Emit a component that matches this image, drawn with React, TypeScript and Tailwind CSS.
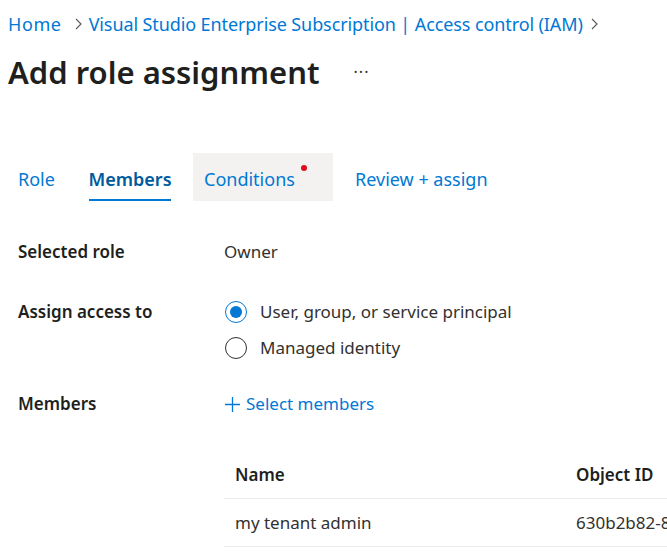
import React from "react";

const font = { fontFamily: '"Noto Sans", "Open Sans", sans-serif' };

function Chevron() {
  return (
    <svg width="10" height="14" viewBox="0 0 10 14" className="ml-[6px]">
      <path d="M3 2 L8 7 L3 12" fill="none" stroke="#605e5c" strokeWidth="1.2" />
    </svg>
  );
}

function Radio({ checked }: { checked?: boolean }) {
  return (
    <span
      className={`w-[22px] h-[22px] rounded-full border flex items-center justify-center shrink-0 ${
        checked ? "border-[#0078d4]" : "border-[#323130]"
      }`}
    >
      {checked && <span className="w-[12px] h-[12px] rounded-full bg-[#0078d4]" />}
    </span>
  );
}

export default function App() {
  return (
    <div className="w-[667px] h-[556px] overflow-hidden bg-white text-[#323130]" style={font}>
      <div className="flex items-center h-[24px] mt-[12px] pl-[8px] text-[18px] text-[#0078d4] whitespace-nowrap">
        <span className="tracking-[0.6px]">Home</span>
        <svg width="10" height="14" viewBox="0 0 10 14" className="ml-[11px] mr-[6px]">
          <path d="M3 2 L8 7 L3 12" fill="none" stroke="#605e5c" strokeWidth="1.2" />
        </svg>
        <span className="tracking-[-0.1px]">Visual Studio Enterprise Subscription | Access control (IAM)</span>
        <Chevron />
      </div>
      <div className="flex items-center h-[44px] mt-[14px] pl-[8px] whitespace-nowrap">
        <span className="text-[31px] font-semibold text-[#201f1e]">Add role assignment</span>
        <span className="ml-[34px] text-[16px] text-[#323130] tracking-[1px]">···</span>
      </div>
      <div className="flex items-stretch h-[48px] mt-[59px] pl-[18px] text-[18px] text-[#0078d4] whitespace-nowrap">
        <div className="w-[71px] flex items-center pt-[5px]">Role</div>
        <div className="relative w-[82px] flex items-center justify-center pt-[5px] font-semibold text-[#005a9e]">
          Members
          <span className="absolute left-0 right-0 bottom-0 h-[2px] bg-[#0078d4]" />
        </div>
        <div className="relative ml-[22px] px-[11px] pt-[5px] w-[140px] flex items-center bg-[#f3f2f1]">
          Conditions
          <span className="absolute left-[108px] top-[12px] w-[6px] h-[6px] rounded-full bg-[#e00b1c]" />
        </div>
        <div className="pl-[22px] pt-[5px] flex items-center">Review + assign</div>
      </div>
      <div className="pl-[18px] text-[17px] whitespace-nowrap">
        <div className="flex items-center h-[30px] mt-[36px]">
          <span className="w-[206px] font-semibold text-[#201f1e]">Selected role</span>
          <span>Owner</span>
        </div>
        <div className="flex mt-[30px]">
          <span className="w-[206px] h-[30px] flex items-center font-semibold text-[#201f1e]">Assign access to</span>
          <div className="flex flex-col gap-[6px]">
            <div className="flex items-center h-[30px] gap-[13px] pl-[1px]">
              <Radio checked />
              <span>User, group, or service principal</span>
            </div>
            <div className="flex items-center h-[30px] gap-[13px] pl-[1px]">
              <Radio />
              <span>Managed identity</span>
            </div>
          </div>
        </div>
        <div className="flex items-center h-[30px] mt-[26px]">
          <span className="w-[206px] font-semibold text-[#201f1e]">Members</span>
          <span className="flex items-center text-[#0078d4]">
            <svg width="17" height="17" viewBox="0 0 17 17" className="mr-[5px]">
              <path d="M8.5 1 V16 M1 8.5 H16" stroke="#0078d4" strokeWidth="1.3" />
            </svg>
            Select members
          </span>
        </div>
        <div className="ml-[206px] mt-[32px]">
          <div className="flex items-center h-[48px] border-b border-[#edebe9] font-semibold text-[#201f1e]">
            <span className="w-[352px] shrink-0 pl-[11px]">Name</span>
            <span>Object ID</span>
          </div>
          <div className="flex items-center h-[48px] border-b border-[#edebe9]">
            <span className="w-[352px] shrink-0 pl-[11px]">my tenant admin</span>
            <span>630b2b82-8e6a-4f0b</span>
          </div>
        </div>
      </div>
    </div>
  );
}
